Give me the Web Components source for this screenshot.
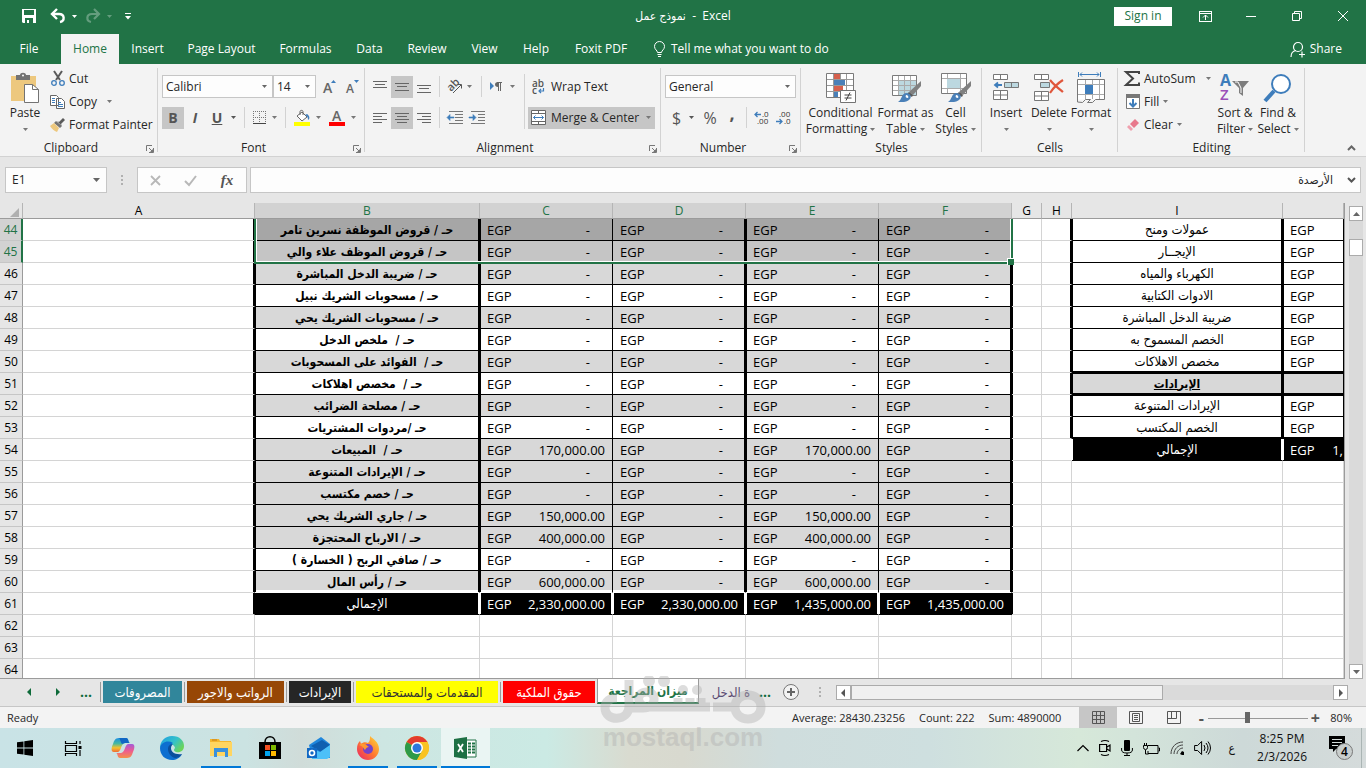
<!DOCTYPE html>
<html lang="en">
<head>
<meta charset="utf-8">
<title>نموذج عمل - Excel</title>
<style>
html,body{margin:0;height:100%}
body{font:12px/16px "Open Sans","Noto Sans","DejaVu Sans Condensed","DejaVu Sans",sans-serif;color:#262626;background:#e6e6e6}
</style>
</head>
<body>
<xl-app></xl-app>
<script>
const BASE = `*{box-sizing:border-box}button,select,input{font:inherit;color:inherit;margin:0;padding:0;border:0;background:none;border-radius:0;outline:0}button{display:inline-flex;align-items:center;justify-content:center;white-space:nowrap}`;
const define = (name, css, html, after) => customElements.define(name, class extends HTMLElement {
  connectedCallback() {
    if (this.shadowRoot) return;
    const t = document.createElement('template');
    t.innerHTML = `<style>${BASE}${css}</style>${typeof html === 'function' ? html(this) : html}`;
    this.attachShadow({ mode: 'open' }).append(t.content.cloneNode(true));
    if (after) after(this);
  }
});

const brush = `<path d="M30 8v5l-8 9-4-3z" fill="#808080"/><path d="M18 19l4 3-1 2-5-3z" fill="#5a5a5a"/><path d="M15 20c4 0 6 3 4 6-3 4-9 3-12 3 4-2 3-8 8-9z" fill="#4a80b8"/><path d="M15 22c2 0 3 2 2 3-2 0-3-1-2-3z" fill="#fff"/>`;
const lines = (ys) => ys.map(([x1, x2, y]) => `<path d="M${x1} ${y}.5H${x2}" stroke="#666"/>`).join('');
const ICONS = {
  save: [14, 14, `<path d="M0 0h14v14H1l-1-1z" fill="#fff"/><path d="M2 1h10v5H2zM3 9h8v5H3z" fill="#217346"/><path d="M5 11h2v3H5z" fill="#fff"/>`],
  undo: [14, 14, `<path d="M2 5h6c6 0 6 7 1 8" fill="none" stroke="#fff" stroke-width="2.4"/><path d="M6 0L1 5l5 5" fill="none" stroke="#fff" stroke-width="2.4"/>`],
  redo: [14, 14, `<g opacity=".3"><path d="M12 5H6c-6 0-6 7-1 8" fill="none" stroke="#fff" stroke-width="2.2"/><path d="M8 0l5 5-5 5" fill="none" stroke="#fff" stroke-width="2.2"/></g>`],
  dn: [5, 3, `<path d="M0 0h5L2.5 3z" fill="currentColor"/>`],
  custom: [6, 7, `<path d="M0 .5h6" stroke="#fff"/><path d="M0 3h6L3 6.500z" fill="#fff"/>`],
  ribbonopt: [13, 11, `<rect x=".5" y=".5" width="12" height="10" fill="none" stroke="#fff"/><path d="M0 2.500h13M6.500 9V4M4 6.500L6.500 4 9 6.500" fill="none" stroke="#fff"/>`],
  min: [10, 10, `<path d="M0 5.500h10" stroke="#fff"/>`],
  restore: [10, 10, `<path d="M.5 2.500h7v7h-7zM2.500 2.500v-2h7v7h-2" fill="none" stroke="#fff"/>`],
  close: [10, 10, `<path d="M0 0l10 10M10 0L0 10" stroke="#fff"/>`],
  share: [16, 17, `<circle cx="8" cy="6" r="4.500" fill="none" stroke="#fff" stroke-width="1.200"/><path d="M1 16c0-4 2-6 5-6.500M9 13.500h6M12 10.500v6" fill="none" stroke="#fff" stroke-width="1.200"/>`],
  bulb: [11, 16, `<path d="M3.500 11.500c0-2-3-3-3-6a5 5 0 0 1 10 0c0 3-3 4-3 6zM3.500 13.500h4M4 15.500h3" fill="none" stroke="#fff"/>`],
  paste: [29, 30, `<path d="M0 3h25v25H0z" fill="#edc87e"/><path d="M5 2h4c0-3 6-3 6 0h4v5H5z" fill="#737373"/><circle cx="12" cy="2.500" r="1" fill="#fff"/><path d="M13.500 11.500h8l6 5v13h-14z" fill="#fff" stroke="#737373"/><path d="M21.500 11.500v5h6" fill="none" stroke="#737373"/>`],
  cut: [14, 15, `<path d="M3 0l6 9M11 0L5 9" stroke="#5a5a5a" stroke-width="2"/><circle cx="3" cy="12" r="2.300" fill="none" stroke="#3e7dbb" stroke-width="1.300"/><circle cx="11" cy="12" r="2.300" fill="none" stroke="#3e7dbb" stroke-width="1.300"/>`],
  copy: [15, 14, `<path d="M.5.500h6l2 2v8h-8zM6.500 3.500h5l3 3v7h-8z" fill="#fff" stroke="#666"/><path d="M2 3.500h3M2 5.500h3M2 7.500h3M8 7.500h3M8 9.500h5M8 11.500h5" stroke="#3e7dbb"/>`],
  painter: [15, 14, `<path d="M13 0l2 2-4 4 1 2-5-5 2 1z" fill="#5a5a5a"/><path d="M6 3l6 5-2 2-6-5z" fill="#737373"/><path d="M4 5l5 5-2 4c-3-1-5-3-7-6z" fill="#edc87e"/>`],
  launch: [8, 8, `<path d="M.5 6V.5H6M3 3l3 3M7.500 3v4.500H3" fill="none" stroke="#777"/><path d="M7 4v3H4z" fill="#777"/>`],
  grow: [14, 15, `<text x="0" y="14" font-size="14" font-weight="600" fill="#666" font-family="Open Sans">A</text><path d="M8 4l2.500-3L13 4z" fill="#3e7dbb"/>`],
  shrink: [13, 15, `<text x="0" y="14" font-size="12" font-weight="600" fill="#666" font-family="Open Sans">A</text><path d="M8 1h5l-2.500 3z" fill="#3e7dbb"/>`],
  borders: [13, 13, `<path d="M.5 0v13M6.500 0v13M12.500 0v13M0 .5h13M0 6.500h13" stroke="#777" stroke-dasharray="1 1"/><path d="M0 12.500h13" stroke="#444"/>`],
  fill: [16, 16, `<path d="M3 6l5-4 5 5-5 4z" fill="#fff" stroke="#666"/><path d="M6 5V1.500c0-1.500 3-1.500 3 0V5" fill="none" stroke="#666"/><path d="M13 4c3 2 3 5 1 6 0-3-1-4-3-5z" fill="#3e7dbb"/><path d="M0 12h16v4H0z" fill="#ff0"/>`],
  fontcolor: [16, 16, `<text x="3" y="11" font-size="14" font-weight="600" fill="#666" font-family="Open Sans">A</text><path d="M0 12h16v4H0z" fill="#f00"/>`],
  top: [14, 14, lines([[0, 14, 1], [2, 12, 4], [0, 14, 7]])],
  mid: [14, 14, lines([[0, 14, 3], [2, 12, 6], [0, 14, 10]])],
  bot: [14, 14, lines([[0, 14, 5], [2, 12, 8], [0, 14, 12]])],
  left: [14, 12, lines([[0, 14, 1], [0, 9, 4], [0, 14, 7], [0, 9, 10]])],
  center: [14, 12, lines([[0, 14, 1], [2, 12, 4], [0, 14, 7], [2, 12, 10]])],
  right: [14, 12, lines([[0, 14, 1], [5, 14, 4], [0, 14, 7], [5, 14, 10]])],
  orient: [17, 15, `<text x="0" y="0" transform="translate(4 13) rotate(-45)" font-size="11" font-weight="600" fill="#555" font-family="Open Sans">ab</text><path d="M6 14l8-8M10.500 5.500h4v4" fill="none" stroke="#555"/>`],
  rtl: [12, 10, `<path d="M0 0l4 4-4 4z" fill="#3e7dbb"/><path d="M8.500 0v9M10.500 0v9M7 .5h5" stroke="#666"/><path d="M8 0c-4 0-4 5 0 5z" fill="#666"/>`],
  outdent: [16, 13, `<path d="M2 .5h14M8 3.500h8M8 6.500h8M8 9.500h8M2 12.500h14" stroke="#777"/><path d="M7 6H3V3.500L0 6.500l3 3V7h4z" fill="#3e7dbb" stroke="#3e7dbb" stroke-width=".6"/>`],
  indent: [16, 13, `<path d="M2 .5h14M9 3.500h7M9 6.500h7M9 9.500h7M2 12.500h14" stroke="#777"/><path d="M0 6h4V3.500l3 3-3 3V7H0z" fill="#3e7dbb" stroke="#3e7dbb" stroke-width=".6"/>`],
  wrap: [13, 15, `<text x="0" y="8" font-size="10" font-weight="600" fill="#555" font-family="Open Sans">ab</text><text x="0" y="15" font-size="10" font-weight="600" fill="#555" font-family="Open Sans">c</text><path d="M11.500 9v3H7M9 10l-2 2 2 2" fill="none" stroke="#3e7dbb" stroke-width="1.200"/>`],
  merge: [15, 15, `<path d="M.5.5h14v14H.5zM.5 3.500h14M.5 11.500h14M7.500 0v3M7.500 12v3" fill="#fff" stroke="#666"/><path d="M2.500 7.500h10M4.500 5.500l-2 2 2 2M10.500 5.500l2 2-2 2" fill="none" stroke="#3e7dbb"/>`],
  dec1: [15, 14, `<text x="8" y="6" font-size="8" fill="#333" font-family="Open Sans">.0</text><text x="3" y="13" font-size="8" fill="#333" font-family="Open Sans">.00</text><path d="M7 3.500H1M3.500 1L1 3.500 3.500 6" fill="none" stroke="#3e7dbb" stroke-width="1.300"/>`],
  dec2: [15, 14, `<text x="3" y="6" font-size="8" fill="#333" font-family="Open Sans">.00</text><text x="8" y="13" font-size="8" fill="#333" font-family="Open Sans">.0</text><path d="M0 10.500h6M3.500 8L6 10.500 3.500 13" fill="none" stroke="#3e7dbb" stroke-width="1.300"/>`],
  cond: [30, 30, `<path d="M.5.5h27v24H.5z" fill="#fff"/><path d="M8 1h6v5H8zM8 13h9v5H8z" fill="#d6604d"/><path d="M8 7h11v5H8zM8 19h4v5H8z" fill="#4a80b8"/><path d="M7.500 0v25M14.500 0v6M20.500 0v19M0 6.500h28M0 12.500h28M0 18.500h28" stroke="#999"/><path d="M.5.5h27v24H.5z" fill="none" stroke="#7a7a7a"/><path d="M14.500 17.500h15v12h-15z" fill="#fff" stroke="#737373"/><path d="M18.500 22h7M18.500 25h7M24 19.500l-4 8" stroke="#444"/>`],
  fmttable: [30, 30, `<path d="M1.500 2.500h24v20h-24z" fill="#fff"/><path d="M8 8h17v14H8z" fill="#bcd8e0"/><path d="M7.500 2v21M13.500 2v21M19.500 2v21M1 7.500h25M1 12.500h25M1 17.500h25" stroke="#aaa"/><path d="M1.500 2.500h24v20h-24z" fill="none" stroke="#7a7a7a"/>${brush}`],
  cellstyles: [30, 30, `<path d="M.5.5h25v20H.5z" fill="#fff"/><path d="M6.500 0v21M19.500 0v21M0 5.500h26M0 15.500h26" stroke="#aaa"/><path d="M6 6h13v9H6z" fill="#bcd8e0"/><path d="M.5.5h25v20H.5z" fill="none" stroke="#7a7a7a"/>${brush}`],
  insert: [26, 30, `<path d="M.5 1.500h14v5H.5zM7.500 1.500v5M.5 17.500h14v9H.5zM.5 22h14M7.500 17.500v9" fill="#fff" stroke="#777"/><path d="M11.500 9.500h14v5h-14zM18.500 9.500v5" fill="#bcd8e0" stroke="#777"/><path d="M9 12H3M5 9.500L2 12l3 2.500" fill="none" stroke="#3e7dbb" stroke-width="1.800"/>`],
  del: [30, 30, `<path d="M.5 1.500h14v5H.5zM7.500 1.500v5M.5 18.500h14v9H.5zM.5 23h14M7.500 18.500v9" fill="#fff" stroke="#777"/><path d="M6.500 9.500h9v5h-9z" fill="#bcd8e0" stroke="#777"/><path d="M16 7c4 5 8 8 13 12M29 7c-5 3-9 7-13 13" fill="none" stroke="#e0563b" stroke-width="2.200"/>`],
  format: [29, 32, `<path d="M1.500 0v5M23.500 0v5M3 2.500h19M5 .5l-2 2 2 2M20 .5l2 2-2 2" fill="none" stroke="#3e7dbb"/><path d="M.5 7.500h27v20H.5z" fill="#fff"/><path d="M8.500 7v20M15.500 7v20M22.500 7v20M0 12.500h28M0 22.500h28" stroke="#aaa"/><path d="M8 13h8v9H8z" fill="#3e7dbb"/><path d="M.5 30V7.500h27v20h-9l-3 3h-5l3-3h-5l-3 3z" fill="none" stroke="#777"/>`],
  sigma: [15, 15, `<path d="M14 3V1H1l7 6.500L1 14h13v-2.500" fill="none" stroke="#444" stroke-width="2"/>`],
  filldn: [14, 15, `<path d="M.5.500h13v14H.5z" fill="#fff" stroke="#777"/><path d="M0 0h14v4H0z" fill="#777"/><path d="M7 5v7M3.500 9L7 12.500 10.500 9" fill="none" stroke="#3e7dbb" stroke-width="2"/>`],
  eraser: [12, 12, `<path d="M8 0l4 4-5 5-4-4z" fill="#e8798c"/><path d="M2 6l4 4-2 2-4-4z" fill="#f0a0ae"/>`],
  sort: [30, 30, `<text x="0" y="13" font-size="16" font-weight="700" fill="#3e7dbb" font-family="Open Sans">A</text><text x="0" y="27" font-size="15" font-weight="600" fill="#9b4fb8" font-family="Open Sans">Z</text><path d="M12 8h17l-6 7v8l-4-3v-5z" fill="#7d7d7d"/><path d="M15 9h3l3 6v5" fill="none" stroke="#fff"/>`],
  find: [28, 28, `<circle cx="17" cy="10" r="9" fill="#fff" stroke="#3e7dbb" stroke-width="2"/><path d="M10 17l-9 10" stroke="#3e7dbb" stroke-width="4"/>`],
  chevup: [9, 6, `<path d="M1 5l3.500-3.500L8 5" fill="none" stroke="#666" stroke-width="2"/>`],
  chevdn: [9, 6, `<path d="M1 1l3.500 3.500L8 1" fill="none" stroke="#555" stroke-width="2"/>`],
  cancel: [11, 11, `<path d="M1 1l9 9M10 1l-9 9" stroke="#b8b8b8" stroke-width="1.800"/>`],
  ok: [13, 11, `<path d="M1 6l4 4 7-9" fill="none" stroke="#b8b8b8" stroke-width="2"/>`],
  dots: [2, 11, `<path d="M0 0h2v2H0zM0 4h2v2H0zM0 8h2v2H0z" fill="#b0b0b0"/>`],
  corner: [9, 9, `<path d="M9 0v9H0z" fill="#b0b0b0"/>`],
  navl: [4, 8, `<path d="M4 0v8L0 4z" fill="currentColor"/>`],
  navr: [4, 8, `<path d="M0 0v8l4-4z" fill="currentColor"/>`],
  up: [7, 4, `<path d="M0 4h7L3.500 0z" fill="#666"/>`],
  down: [7, 4, `<path d="M0 0h7L3.500 4z" fill="#666"/>`],
  add: [16, 16, `<circle cx="8" cy="8" r="7.500" fill="#f3f3f3" stroke="#777"/><path d="M8 4v8M4 8h8" stroke="#666" stroke-width="2"/>`],
  vnormal: [13, 13, `<path d="M.5.5h12v12H.5zM4.500 0v13M8.500 0v13M0 4.500h13M0 8.500h13" fill="none" stroke="#555"/>`],
  vpage: [14, 13, `<path d="M.5.5h13v12H.5zM3.500 2.500h7v8h-7zM5 4.500h4M5 6.500h4M5 8.500h4" fill="none" stroke="#555"/>`],
  vbreak: [14, 13, `<path d="M.5.5h13v12H.5zM.5 7.500h9v-7M4.500 0v7" fill="none" stroke="#555"/>`],
  start: [16, 16, `<path d="M0 2.300L6.500 1.400v6.200H0zM7.300 1.300L16 0v7.600H7.300zM0 8.400h6.500v6.200L0 13.700zM7.300 8.400H16V16l-8.700-1.300z" fill="#000"/>`],
  taskview: [17, 15, `<path d="M.5 0v2.500h11V0M.5 4.500h11v6H.5zM.5 15v-2.500h11V15M15 0v3M15 9v6" fill="none" stroke="#000" stroke-width="1.200"/><path d="M13.500 5h3v3h-3z"/>`],
  copilot: [24, 22, `<defs><linearGradient id="a" x1="0" x2="0" y1="0" y2="1"><stop offset="0" stop-color="#1a8fe3"/><stop offset=".4" stop-color="#46b9a0"/><stop offset=".7" stop-color="#f4c12e"/><stop offset="1" stop-color="#ee6c35"/></linearGradient><linearGradient id="b" x1="0" x2="0" y1="0" y2="1"><stop offset="0" stop-color="#a45ad8"/><stop offset=".5" stop-color="#ee5d8f"/><stop offset="1" stop-color="#f4904a"/></linearGradient></defs><path d="M8 1h7c3 0 2 5 4 5h-5c-4 0-4 9-7 9H3C-1 15 1 9 2 7c1-3 2-6 6-6z" fill="url(#a)"/><path d="M8 1h7c3 0 2 5 4 5h-5l-3 1C9 4 9 1 8 1z" fill="#1167c4"/><path d="M16 21H9c-3 0-2-5-4-5h5c4 0 4-9 7-9h4c4 0 2 6 1 8-1 3-2 6-6 6z" fill="url(#b)"/>`],
  edge: [24, 24, `<defs><linearGradient id="a" x1="0" x2="1" y1="0" y2=".6"><stop offset="0" stop-color="#1b9de2"/><stop offset=".6" stop-color="#35c1c9"/><stop offset="1" stop-color="#6bd45a"/></linearGradient></defs><path d="M0 12C0 5 5 0 12 0c8 0 12 5 12 10 0 5-4 7-8 6-3-1-2-3-1-4 0-4-9-8-15 0z" fill="url(#a)"/><path d="M0 12c1-6 8-8 13-5-5 3-5 11 1 13 3 1 6 0 8-2-2 4-6 6-10 6C5 24 0 19 0 12z" fill="#0d6fd0"/><path d="M8 13c0-3 2-5 5-5-1 1-2 2-2 4 0 4 4 7 11 6-2 3-5 4-7 4-4-1-7-5-7-9z" fill="#0a4f9c"/>`],
  folder: [22, 20, `<path d="M0 1h9l1 2h11v14H0z" fill="#f5b62d"/><path d="M0 4h22v14H0z" fill="#ffd560"/><path d="M4 10h14v9h-3v-5H7v5H4z" fill="#3a91dc"/><path d="M2 2h5" stroke="#c17a1a"/>`],
  store: [24, 24, `<path d="M1 6h22v17H1z"/><path d="M7 6c0-7 10-7 10 0" fill="none" stroke="#000" stroke-width="1.500"/><path d="M7 9h5v5H7z" fill="#f25022"/><path d="M13 9h5v5h-5z" fill="#7fba00"/><path d="M7 15h5v5H7z" fill="#00a4ef"/><path d="M13 15h5v5h-5z" fill="#ffb900"/>`],
  mail: [24, 22, `<path d="M2 8L14 0l9 7v14H5z" fill="#1f86dc"/><path d="M4 9L15 3l8 5-9 7z" fill="#0f5fb0"/><path d="M4 11l9 4 10-7v12l-3 2H5z" fill="#4cc0f8"/><path d="M0 11h10v10H0z" fill="#1168c4"/><circle cx="5" cy="16" r="2.500" fill="none" stroke="#fff" stroke-width="1.600"/>`],
  firefox: [24, 24, `<defs><linearGradient id="a" x1="1" x2="0" y1="0" y2="1"><stop offset="0" stop-color="#ffe03a"/><stop offset=".5" stop-color="#ff7a2f"/><stop offset="1" stop-color="#e8206a"/></linearGradient></defs><path d="M14 0c3 3 9 6 9 13a11 11 0 0 1-22 0c0-4 1-6 3-8l1 3c2-2 5-2 7-1 2-2 2-4 2-7z" fill="url(#a)"/><circle cx="12" cy="13" r="5" fill="#7542c8"/><path d="M3 9c5-4 8 1 10 2-2 0-3 1-4 3-1-1-2-4-6-5z" fill="#ff9a2e"/>`],
  chrome: [24, 24, `<circle cx="12" cy="12" r="12" fill="#f9c322"/><path d="M12 12L1.600 6A12 12 0 0 1 22.400 6z" fill="#e33b2e"/><path d="M12 12L1.600 6A12 12 0 0 0 12 24l5-9z" fill="#2d9a48"/><path d="M12 6h10.400a12 12 0 0 1-10.400 18l5.200-9z" fill="#f9c322"/><circle cx="12" cy="12" r="6" fill="#fff"/><circle cx="12" cy="12" r="4.500" fill="#2c77dd"/>`],
  excel: [23, 22, `<path d="M12 3h10v17H12z" fill="#fff" stroke="#217346"/><path d="M14 6.500h3M18 6.500h3M14 9.500h3M18 9.500h3M14 12.500h3M18 12.500h3M14 15.500h3M18 15.500h3" stroke="#217346" stroke-width="2"/><path d="M0 2l13-2v22L0 20z" fill="#1d7044"/><path d="M4 7l5 8M9 7l-5 8" stroke="#fff" stroke-width="1.800"/>`],
  tchev: [12, 8, `<path d="M.5 7L6 1.500 11.500 7" fill="none" stroke="#000" stroke-width="1.200"/>`],
  meet: [12, 16, `<path d="M2 1.500q4-2 8 0M2 14.500q4 2 8 0M.6 4.500h7v7h-7zM8 7l3-2v6L8 9" fill="none" stroke="#000" stroke-width="1.200"/>`],
  mic: [12, 16, `<rect x="3" y="0" width="6" height="11" rx="1"/><path d="M.6 8v2q0 3 5.400 3t5.400-3V8M6 13v3M3 15.500h6" fill="none" stroke="#000"/>`],
  batt: [17, 12, `<path d="M5 3.500h10v8H5V9M15.500 6h1v3h-1M2.500 8v4h3M.5 3.500h4v2q0 2-2 2t-2-2zM1.500 1v3M3.500 1v3" fill="none" stroke="#000"/>`],
  wifi: [14, 14, `<path d="M1 13C1 6 6 1 13 1M4 13c0-5 4-9 9-9M7 13c0-3 3-6 6-6" fill="none" stroke="#444"/><path d="M12 14l-2-1 2-3 2 1v3z"/>`],
  vol: [17, 14, `<path d="M.6 4.500h3l4-4v13l-4-4h-3zM10 4q2 3 0 6M12 2q4 5 0 10M14 .5q5 6.500 0 13" fill="none" stroke="#000"/>`],
  notif: [24, 25, `<path d="M0 0h16v13H7l-3 3v-3H0z"/><path d="M3 3.500h10M3 6.500h10M3 9.500h6" stroke="#d5dcda"/><circle cx="15.500" cy="15.500" r="8" fill="#c9cecd" stroke="#777"/><text x="15.500" y="20" text-anchor="middle" font-size="12" font-weight="600" font-family="Open Sans">4</text>`],
};
define('x-icon', `:host{display:inline-flex;flex:none}svg{display:block;overflow:visible}`, el => {
  const [w, h, d] = ICONS[el.getAttribute('name')];
  return `<svg width="${w}" height="${h}" viewBox="0 0 ${w} ${h}" aria-hidden="true">${d}</svg>`;
});
const ic = n => `<x-icon name="${n}"></x-icon>`;

define('xl-titlebar', `:host{display:grid;grid-template-columns:1fr auto 1fr;align-items:center;height:34px;background:#217346;color:#fff;padding-bottom:2px}
.q{display:flex;align-items:center;padding-left:22px}.q button:nth-child(2){margin-left:15px;gap:7px}.q button:nth-child(3){margin:0 13px 0 9px;gap:7px}.q button:nth-child(3) x-icon+x-icon{opacity:.3}
.w{display:flex;justify-content:flex-end;align-items:center}.w button{width:46px;height:32px}.w .s{width:58px;height:19px;background:#fff;color:#217346;margin-right:10px}
.t{white-space:pre}`,
`<div class="q"><button aria-label="Save">${ic('save')}</button><button aria-label="Undo">${ic('undo')}${ic('dn')}</button><button aria-label="Redo">${ic('redo')}${ic('dn')}</button><button aria-label="Customize">${ic('custom')}</button></div>
<div class="t">نموذج عمل&lrm;  -  Excel</div>
<div class="w"><button class="s">Sign in</button><button aria-label="Ribbon display">${ic('ribbonopt')}</button><button aria-label="Minimize">${ic('min')}</button><button aria-label="Restore">${ic('restore')}</button><button aria-label="Close">${ic('close')}</button></div>`);

define('xl-tabs', `:host{display:flex;height:30px;background:#217346;color:#fff}
button{height:30px;width:var(--w)}.on{background:#f3f3f3;color:#217346}.file{margin-right:3px}.tell{gap:6px;margin-left:14px;font-weight:500}.share{margin-left:auto;padding-right:24px;gap:4px}`,
[['File', 58], ['Home', 58], ['Insert', 57], ['Page Layout', 91], ['Formulas', 77], ['Data', 51], ['Review', 64], ['View', 51], ['Help', 52], ['Foxit PDF', 78]]
  .map(([t, w]) => `<button style="--w:${w}px"${t === 'Home' ? ' class="on"' : t === 'File' ? ' class="file"' : ''}>${t}</button>`).join('') +
`<button class="tell">${ic('bulb')}Tell me what you want to do</button><button class="share">${ic('share')}Share</button>`);

define('xl-group', `:host{display:flex;flex-direction:column;flex:none;width:var(--w);position:relative;padding:7px 0 0;height:92px;background:linear-gradient(#d2d2d2,#d2d2d2) 100% 4px/1px 84px no-repeat}
.c{flex:1;min-height:0;display:flex}.l{height:16px;text-align:center;line-height:16px}
.l span{display:block;padding-right:16px}.n span{padding:0}button{position:absolute;right:4px;bottom:3px;height:8px}`,
el => `<div class="c"><slot></slot></div><div class="l${el.hasAttribute('launcher') ? '' : ' n'}"><span>${el.getAttribute('label')}</span></div>${el.hasAttribute('launcher') ? `<button aria-label="${el.getAttribute('label')} settings">${ic('launch')}</button>` : ''}`);

define('xl-big', `:host{display:block;flex:none;width:var(--w)}button{width:100%;display:flex;flex-direction:column;justify-content:flex-start;line-height:16px}.i{height:34px;display:flex;align-items:center}.t{display:flex;align-items:center;gap:3px;height:16px}x-icon{color:#777}`,
el => { const [a, b] = el.getAttribute('label').split('|'); return `<button><span class="i">${ic(el.getAttribute('icon'))}</span><span class="t">${a}</span><span class="t">${b || ''}${ic('dn')}</span></button>`; });

define('xl-row', `:host{display:block}button{height:23px;gap:4px;justify-content:flex-start}.i{width:15px;display:flex;justify-content:center}.a{color:#777;margin-left:var(--g,4px)}`,
el => `<button><span class="i">${ic(el.getAttribute('icon'))}</span><span>${el.getAttribute('label')}</span>${el.hasAttribute('menu') ? `<x-icon class="a" name="dn"></x-icon>` : ''}</button>`);

define('xl-select', `:host{display:grid;flex:none;width:var(--w);height:23px;align-items:center}select,x-icon{grid-area:1/1}select{appearance:none;width:100%;height:23px;border:1px solid #c6c6c6;background:#fdfdfd;padding-left:3px}x-icon{justify-self:end;margin-right:6px;color:#666;pointer-events:none}`,
el => `<select aria-label="${el.getAttribute('label')}"><option>${el.getAttribute('value')}</option></select>${ic('dn')}`);

define('xl-ribbon', `:host{display:flex;height:93px;background:#f3f3f3;border-bottom:1px solid #d2d2d2}
.rows{display:flex;flex-direction:column;margin-top:-4px}.r{display:flex;align-items:center;height:23px}.stack{display:flex;flex-direction:column;gap:8px;padding:4px 0 0 4px}
.b{width:22px;height:22px;color:#555}.on{background:#c6c6c6}.m{height:22px;gap:6px;justify-content:flex-start;color:#555}.m x-icon+x-icon,.g{color:#777}
.sep{width:1px;height:21px;background:#d2d2d2}.vs{width:1px;height:55px;background:#d2d2d2;margin:3px 3px 0 9px}
.big{font-size:14px;font-weight:700}.sy{font-size:16px}.comma{font-size:18px;font-weight:700;padding-bottom:9px}.end{margin:auto 10px 5px auto}`,
`<xl-group label="Clipboard" launcher style="--w:158px"><xl-big style="--w:50px" icon="paste" label="Paste"></xl-big><div class="rows"><xl-row icon="cut" label="Cut"></xl-row><xl-row icon="copy" label="Copy" menu style="--g:6px"></xl-row><xl-row icon="painter" label="Format Painter"></xl-row></div></xl-group>
<xl-group label="Font" launcher style="--w:207px"><div class="stack">
<div class="r"><xl-select label="Font" value="Calibri" style="--w:111px"></xl-select><xl-select label="Font size" value="14" style="--w:43px"></xl-select><button class="b" style="margin-left:3px" aria-label="Grow font">${ic('grow')}</button><button class="b" aria-label="Shrink font">${ic('shrink')}</button></div>
<div class="r"><button class="b on big">B</button><button class="b big"><i>I</i></button><button class="b big"><u>U</u></button><button class="m" style="margin-left:3px" aria-label="Underline style">${ic('dn')}</button><span class="sep" style="margin:0 8px"></span><button class="m" aria-label="Borders">${ic('borders')}${ic('dn')}</button><span class="sep" style="margin:0 8px"></span><button class="m" style="gap:6px" aria-label="Fill color">${ic('fill')}${ic('dn')}</button><button class="m" style="margin-left:8px" aria-label="Font color">${ic('fontcolor')}${ic('dn')}</button></div></div></xl-group>
<xl-group label="Alignment" launcher style="--w:296px"><div class="stack">
<div class="r"><button class="b" aria-label="Top">${ic('top')}</button><button class="b on" aria-label="Middle">${ic('mid')}</button><button class="b" aria-label="Bottom">${ic('bot')}</button><span class="sep" style="margin:0 7px 0 4px"></span><button class="m" style="gap:3px" aria-label="Orientation">${ic('orient')}${ic('dn')}</button><span class="sep" style="margin:0 8px 0 9px"></span><button class="m" style="gap:8px" aria-label="Direction">${ic('rtl')}${ic('dn')}</button></div>
<div class="r"><button class="b" aria-label="Left">${ic('left')}</button><button class="b on" aria-label="Center">${ic('center')}</button><button class="b" aria-label="Right">${ic('right')}</button><span class="sep" style="margin:0 7px 0 4px"></span><button class="m" aria-label="Decrease indent">${ic('outdent')}</button><button class="m" style="margin-left:6px" aria-label="Increase indent">${ic('indent')}</button></div></div>
<span class="vs"></span><div class="stack" style="padding-left:0"><div class="r"><button class="m" style="padding-left:4px;color:#262626">${ic('wrap')}Wrap Text</button></div><div class="r"><button class="m on" style="padding:0 4px 0 3px;gap:5px;color:#262626;width:127px">${ic('merge')}<span style="flex:1;text-align:left">Merge &amp; Center</span><x-icon name="dn" class="g"></x-icon></button></div></div></xl-group>
<xl-group label="Number" launcher style="--w:140px"><div class="stack"><div class="r"><xl-select label="Number format" value="General" style="--w:131px"></xl-select></div>
<div class="r"><button class="m sy" style="padding-left:7px;gap:8px"><span>$</span>${ic('dn')}</button><button class="b sy" style="margin-left:5px">%</button><button class="b comma">,</button><span class="sep" style="margin:0 7px 0 3px"></span><button class="m" aria-label="Increase decimal">${ic('dec1')}</button><button class="m" style="margin-left:7px" aria-label="Decrease decimal">${ic('dec2')}</button></div></div></xl-group>
<xl-group label="Styles" style="--w:181px"><xl-big style="--w:79px" icon="cond" label="Conditional|Formatting"></xl-big><xl-big style="--w:51px" icon="fmttable" label="Format as|Table"></xl-big><xl-big style="--w:49px" icon="cellstyles" label="Cell|Styles"></xl-big></xl-group>
<xl-group label="Cells" style="--w:136px"><xl-big style="--w:48px" icon="insert" label="Insert"></xl-big><xl-big style="--w:38px" icon="del" label="Delete"></xl-big><xl-big style="--w:46px" icon="format" label="Format"></xl-big></xl-group>
<xl-group label="Editing" style="--w:187px"><div class="rows" style="width:88px;padding-left:7px"><xl-row icon="sigma" label="AutoSum" menu style="--g:6px"></xl-row><xl-row icon="filldn" label="Fill" menu style="--g:0px"></xl-row><xl-row icon="eraser" label="Clear" menu style="--g:0px"></xl-row></div><span style="width:6px"></span><xl-big style="--w:46px" icon="sort" label="Sort &amp;|Filter"></xl-big><xl-big style="--w:40px" icon="find" label="Find &amp;|Select"></xl-big></xl-group>
<button class="end" aria-label="Collapse ribbon">${ic('chevup')}</button>`);

define('xl-formula', `:host{display:flex;align-items:center;height:46px;padding:0 5px}
.n,.f,.e{display:flex;align-items:center;height:26px;background:#fdfdfd;border:1px solid #c6c6c6}.n{width:102px;padding:0 6px}.n input{width:100%;flex:1;min-width:0}.n button{color:#666}
.d{margin:0 14px}.e{width:110px;justify-content:space-between;padding:0 12px}.f{flex:1;margin-left:3px;padding:0 4px 0 8px}.f input{flex:1;min-width:0;text-align:right;padding-right:14px}
.fx{font:italic 600 15px/20px "Liberation Serif",serif;color:#555;width:14px}`,
`<div class="n"><input aria-label="Name box" value="E1"><button aria-label="Names">${ic('down')}</button></div><x-icon class="d" name="dots"></x-icon><div class="e"><button aria-label="Cancel">${ic('cancel')}</button><button aria-label="Enter">${ic('ok')}</button><button class="fx">fx</button></div><div class="f"><input aria-label="Formula" value="الأرصدة"><button aria-label="Expand">${ic('chevdn')}</button></div>`);

const NAMES = ['حـ / قروض الموظفة نسرين تامر', 'حـ / قروض الموظف علاء والي', 'حـ / ضريبة الدخل المباشرة', 'حـ / مسحوبات الشريك نبيل', 'حـ / مسحوبات الشريك يحي', 'حـ /  ملخص الدخل', 'حـ /  الفوائد على المسحوبات', 'حـ /  مخصص اهلاكات', 'حـ / مصلحة الضرائب', 'حـ /مردوات المشتريات', 'حـ /  المبيعات', 'حـ / الإيرادات المتنوعة', 'حـ / خصم مكتسب', 'حـ / جاري الشريك يحي', 'حـ / الارباح المحتجزة', 'حـ / صافي الربح ( الخسارة )', 'حـ / رأس المال', 'الإجمالي'];
const SIDE = ['عمولات ومنح', 'الإيجــار', 'الكهرباء والمياه', 'الادوات الكتابية', 'ضريبة الدخل المباشرة', 'الخصم المسموح به', 'مخصص الاهلاكات', 'الإيرادات', 'الإيرادات المتنوعة', 'الخصم المكتسب', 'الإجمالي'];
const WHITE = [47, 49, 51, 53, 59];
const AMOUNT = { 54: '170,000.00', 57: '150,000.00', 58: '400,000.00', 60: '600,000.00' };
const money = (v, c = '') => `<td class="${c}"><div class="m"><span>EGP</span><span class="${v === '-' ? 'dash' : ''}">${v}</span></div></td>`;
const bodyRows = () => {
  let out = '';
  for (let n = 44; n <= 64; n++) {
    const k = n - 44, main = n <= 61, side = n <= 54;
    const tone = n === 44 ? 's1' : n === 45 ? 's2' : n === 61 ? 'tot' : WHITE.includes(n) ? '' : 'gr';
    let r = `<th scope="row" class="${n < 46 ? 'sel' : ''}">${n}</th><td class="${main ? 'kr rr' : ''}"></td>`;
    if (main) {
      const last = n === 61, c = `k ${tone}${n === 60 ? ' pre' : ''}`, a = AMOUNT[n] || '-';
      r += `<td class="nm ${c} ll ${last ? 'wr' : 'rr'}" dir="rtl">${NAMES[k]}</td>`;
      const v = last ? ['2,330,000.00', '2,330,000.00', '1,435,000.00', '1,435,000.00'] : [a, '-', a, '-'];
      r += money(v[0], `${c} ${last ? 'wl wr' : 'll'}`) + money(v[1], `${c} ${last ? 'wl wr' : 'rr'}`) + money(v[2], `${c} ${last ? 'wl wr' : 'll'}`) + money(v[3], `${c} ${last ? 'wl' : 'rr'}`);
      r += `<td class="ll"></td>`;
    } else r += '<td></td>'.repeat(6);
    r += `<td class="${side ? 'kr' + (n < 54 ? ' rr' : ' wr2') : ''}"></td>`;
    if (side) {
      const hd = n === 51 ? ' gr hd tk bk' : n === 50 ? ' bk' : n === 52 ? ' tk' : n === 53 ? ' bk' : '';
      const t = n === 54 ? ' tot' : '';
      r += `<td class="si k${hd}${t} ${t ? 'wl wr' : 'll rr'}" dir="rtl">${SIDE[k]}</td>`;
      r += n === 51 ? `<td class="k${hd} ll"></td>` : money(n === 54 ? '1,' : '', `k${hd}${t} ${t ? 'wl flush' : 'll'}`);
    } else r += '<td></td><td></td>';
    out += `<tr>${r}</tr>`;
  }
  return out;
};
define('xl-grid', `:host{display:flex;flex:1;min-height:0;background:#e6e6e6}
.v{flex:1;min-width:0;overflow:hidden;position:relative;border-right:1px solid #9b9b9b;border-bottom:1px solid #9b9b9b;background:#fff}
table{border-collapse:separate;border-spacing:0;table-layout:fixed;width:100%}
th,td{padding:0;height:22px;line-height:18px;border:0 solid #d4d4d4;border-width:0 1px 1px 0;font-weight:400;overflow:hidden;white-space:pre;color:#000}
td{font-size:13px;--l:0px;--r:0px;--t:0px;--b:0px;--lc:#000;--rc:#000;--bc:#000;box-shadow:inset var(--l) 0 var(--lc),inset var(--r) 0 var(--rc),inset 0 var(--t) #000,inset 0 var(--b) var(--bc)}
thead th{height:16px;line-height:14px;background:#e6e6e6;border-color:#9b9b9b;border-right-color:#b5b5b5}
thead .sel{background:#d2d2d2;color:#217346}tbody th{background:#e6e6e6;border-color:#c6c6c6;border-right-color:#9b9b9b;line-height:20px;padding-top:1px}
tbody .sel{background:#d2d2d2;color:#217346;border-right:2px solid #217346}thead .cn{text-align:right;line-height:0}.cn x-icon{margin:3px 3px 0 0}
.k{border-color:#000}.kr{border-right-color:#000}
.ll{--l:1px}.rr{--r:-1px;border-right-color:#000}.wl{--l:1px;--lc:#fff}.wr{--r:-1px;--rc:#fff;border-right-color:#fff}.wr2{border-right-color:#fff}.tk{--t:1px}.bk{--b:-1px}
.gr{background:#d8d8d8}.s1{background:#a6a6a6}.s2{background:#c5c5c5}.tot{background:#000;color:#fff;--b:-1px}.pre{--b:-2px;--bc:#fff;border-bottom-color:#fff}
.nm,.si{text-align:center;font-family:"DejaVu Sans Condensed","DejaVu Sans",sans-serif}.nm{font-size:12px;font-weight:700}.nm.tot{font-size:13px;font-weight:400}.hd{font-size:12px;font-weight:700;text-decoration:underline}
.m{display:flex;justify-content:space-between;padding:0 7px}.flush .m{padding-right:0}.dash{padding-right:15px}.tot .m{color:#fff}
.sel-box{position:absolute;left:254px;top:14px;width:759px;height:47px;border:2px solid #217346;border-top:0;box-shadow:inset 1px 0 #fff,inset -1px 0 #fff,inset 0 -1px #fff;clip-path:inset(2px -4px -4px -1px)}
.sel-box::after{content:"";position:absolute;right:-3px;bottom:-3px;width:6px;height:6px;background:#217346;border:solid #fff;border-width:1px 0 0 1px}
.sb{width:21px;display:flex;flex-direction:column;padding:3px 3px 0 4px}.sb button{height:15px;background:#fff;border:1px solid #ababab;flex:none}.tr{flex:1;background:#dadada;padding-top:18px}.th{height:17px;background:#fff;border:1px solid #ababab}`,
() => `<div class="v"><table><colgroup>${[23, 232, 225, 133, 133, 133, 133, 30, 30, 211].map(w => `<col style="width:${w}px">`).join('')}<col></colgroup><thead><tr><th class="cn">${ic('corner')}</th>${'ABCDEFGHI'.split('').map(c => `<th scope="col" class="${'BCDEF'.includes(c) ? 'sel' : ''}">${c}</th>`).join('')}<th></th></tr></thead><tbody>${bodyRows()}</tbody></table><div class="sel-box"></div></div>
<div class="sb"><button aria-label="Scroll up">${ic('up')}</button><div class="tr"><div class="th"></div></div><button aria-label="Scroll down">${ic('down')}</button></div>`);

define('xl-sheets', `:host{display:flex;align-items:flex-start;height:28px;border-bottom:1px solid #c6c6c6;background:#e6e6e6;color:#0e6b3a;font-size:13px}
button{flex:none}.nav{height:26px}.t{height:22px;margin:2px 5px 0 0;width:var(--w);background:var(--c);color:var(--f,#fff);position:relative}.t::before{content:"";position:absolute;left:-3px;top:1px;bottom:1px;width:1px;background:#9b9b9b}
.act{height:25px;width:102px;margin:0 0 0 -3px;background:#fff;color:#217346;font-size:12px;font-weight:700;border:1px solid #9b9b9b;border-top:0;border-bottom:2px solid #217346}
.el{font-weight:700;font-size:14px}.nx{height:26px;color:#5b4b73;width:40px;margin-left:12px}
.sc{flex:1;display:flex;height:15px;margin-top:6px;background:#dadada}.sc button{width:15px;background:#fff;border:1px solid #ababab;color:#555}.thumb{width:312px;background:#f0f0f0;border:1px solid #ababab;margin-right:auto}`,
`<button class="nav" style="margin-left:27px" aria-label="Previous sheet">${ic('navl')}</button><button class="nav" style="margin-left:25px" aria-label="Next sheet">${ic('navr')}</button><button class="nav el" style="margin:0 11px 0 20px">...</button>
<button class="t" style="--w:79px;--c:#31869b">المصروفات</button><button class="t" style="--w:97px;--c:#974706">الرواتب والاجور</button><button class="t" style="--w:62px;--c:#262626">الإيرادات</button><button class="t" style="--w:142px;--c:#ff0;--f:#333">المقدمات والمستحقات</button><button class="t" style="--w:92px;--c:#f00">حقوق الملكية</button><button class="act">ميزان المراجعة</button>
<button class="nx">ة الدخل</button><button class="nav el" style="margin:0 12px 0 8px">...</button><button class="nav" aria-label="New sheet">${ic('add')}</button><x-icon name="dots" style="margin:8px 15px 0 20px"></x-icon>
<div class="sc"><button aria-label="Scroll left">${ic('navl')}</button><div class="thumb"></div><button aria-label="Scroll right">${ic('navr')}</button></div><span style="width:18px"></span>`);

define('xl-status', `:host{display:flex;align-items:center;height:21px;background:#f3f3f3;font-size:11px;padding:0 14px 0 7px}
.s{margin-left:auto;display:flex;gap:14px;margin-right:18px}.v{width:38px;height:21px}.on{background:#c6c6c6}.z{width:10px;font-size:16px;font-weight:700;color:#555}
input{appearance:none;width:100px;height:12px;margin:0 2px;background:linear-gradient(#999,#999) 0 6px/100% 1px no-repeat}input::-webkit-slider-thumb{appearance:none;width:5px;height:11px;background:#666}`,
`<span>Ready</span><div class="s"><span>Average: 28430.23256</span><span>Count: 222</span><span>Sum: 4890000</span></div><button class="v on" aria-label="Normal">${ic('vnormal')}</button><button class="v" aria-label="Page layout">${ic('vpage')}</button><button class="v" aria-label="Page break">${ic('vbreak')}</button><button class="z" style="margin-left:3px">-</button><input type="range" aria-label="Zoom" min="0" max="100" value="39"><button class="z">+</button><span style="margin-left:10px">80%</span>`);

define('win-taskbar', `:host{display:flex;height:40px;flex:none;background:linear-gradient(90deg,#c9e3e6,#cbe3e2 18%,#d0dcd9 22%,#cde6e2 28%,#cbeae4 40%,#d9dbd0 46%,#d8d9cf 50%,#cfdddd 57%,#cedfdf 68%,#d6e8d9 79%,#d3e4da 83%,#cdd9d8 91%,#d5dbdb);color:#111}
.a{width:49px;height:40px;flex:none;position:relative}.run::after{content:"";position:absolute;left:5px;right:4px;bottom:0;height:2px;background:#0078d7}.cur{background:#eaf5f3}.cur::after{left:0;right:0}
.t{margin-left:auto;display:flex;align-items:center;gap:10px;padding-right:8px}.clk{text-align:center;line-height:18px;margin:0 12px 0 6px}.ar{margin:0 6px 0 8px}.e{border-left:1px solid #aab5b4;width:5px}`,
`${['start', 'taskview', 'copilot', 'edge', 'folder', 'store', 'mail', 'firefox', 'chrome', 'excel'].map(n => `<button class="a${['folder', 'firefox', 'chrome', 'excel'].includes(n) ? ' run' : ''}${n === 'excel' ? ' cur' : ''}" aria-label="${n}">${ic(n)}</button>`).join('')}
<div class="t">${['tchev', 'meet', 'mic', 'batt', 'wifi', 'vol'].map(ic).join('')}<span class="ar">ع</span><div class="clk">8:25 PM<br>2/3/2026</div>${ic('notif')}</div><span class="e"></span>`);

define('water-mark', `:host{position:absolute;left:600px;bottom:18px;width:166px;height:74px;pointer-events:none;color:#b0b0b0;opacity:.42}
svg{display:block}div{font:700 26px/26px "Liberation Sans",sans-serif;text-align:center}`,
`<svg width="166" height="48" viewBox="0 0 166 48" fill="none" stroke="currentColor" stroke-width="9"><path d="M29 4v26c0 16-24 16-24 2 0-7 5-10 12-10M29 32h14c14 0 14-16 4-16-11 0-11 12-1 15h64M78 31V22M90 31V22M101 31V22M113 31h22c0-16 26-16 26 0 0 16-26 16-26 0" stroke-linejoin="round"/><g fill="currentColor" stroke="none"><circle cx="49" cy="5" r="6"/><circle cx="64" cy="5" r="6"/><circle cx="83" cy="14" r="5"/><circle cx="97" cy="14" r="5"/></g></svg><div>mostaql.com</div>`);

define('xl-app', `:host{display:flex;flex-direction:column;height:100vh;min-width:1366px;position:relative;overflow:hidden}`,
`<xl-titlebar></xl-titlebar><xl-tabs></xl-tabs><xl-ribbon></xl-ribbon><xl-formula></xl-formula><xl-grid></xl-grid><xl-sheets></xl-sheets><xl-status></xl-status><win-taskbar></win-taskbar><water-mark></water-mark>`);
</script>
</body>
</html>
